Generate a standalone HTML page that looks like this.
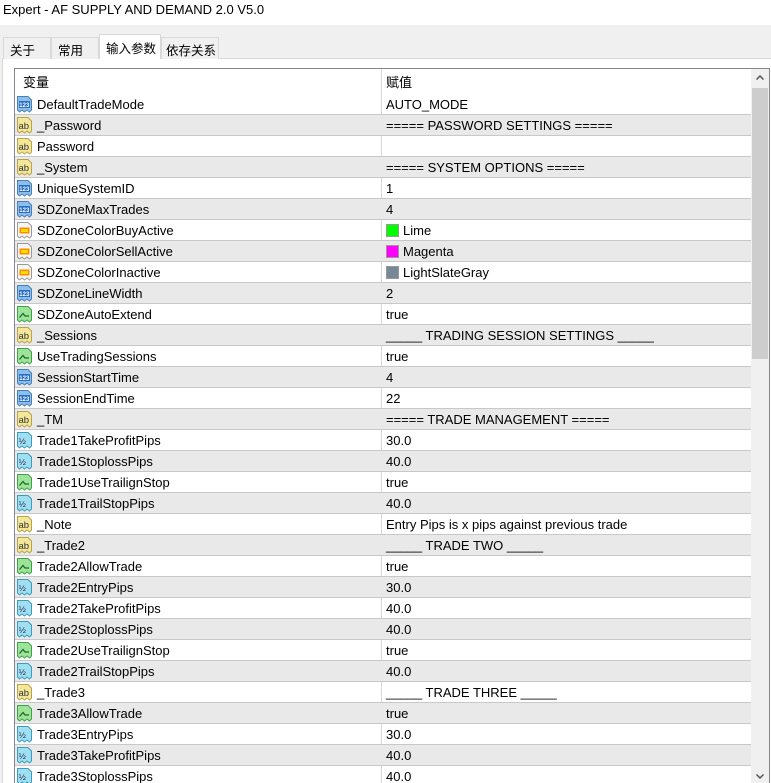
<!DOCTYPE html>
<html><head><meta charset="utf-8"><style>
*{margin:0;padding:0;box-sizing:border-box}
body{width:771px;height:783px;overflow:hidden;background:#f0f0f0;font-family:"Liberation Sans","Noto Sans CJK SC",sans-serif;font-size:13px;color:#000;position:relative}
.title{position:absolute;left:0;top:0;width:771px;height:25px;background:#fff;padding:2px 0 0 3px;font-size:13px}
.tab{position:absolute;top:37px;height:22px;border:1px solid #d9d9d9;border-bottom:none;background:#f0f0f0;padding:2px 0 0 6px;font-size:12.5px}
.tab.act{top:34px;height:25px;background:#fff;z-index:2;padding-top:3px}
.panel{position:absolute;left:2px;top:58px;width:769px;height:725px;background:#fff;border-top:1px solid #d9d9d9;border-left:1px solid #d9d9d9}
.tbl{position:absolute;left:14px;top:68px;width:756px;height:715px;border:1px solid #828790;border-bottom:none;background:#fff;overflow:hidden}
.hdr{position:absolute;left:0;top:0;width:736px;height:25px}
.hdr span{position:absolute;top:3px}
.row{position:absolute;left:0;width:736px;height:21px;border-bottom:1px solid #c8c8c8}
.row.g{background:#e9e9e9}
.row .n{position:absolute;left:22px;top:3px;white-space:nowrap}
.row .v{position:absolute;left:371px;top:3px;white-space:nowrap}
.row svg{position:absolute;left:2px;top:2px}
.div{position:absolute;left:366px;top:0;width:1px;height:715px;background:#d8d8d8}
.sw{display:inline-block;width:13px;height:13px;border:1px solid #999;vertical-align:-2px;margin-right:4px}
.sb{position:absolute;left:736px;top:0;width:18px;height:715px;background:#f0f0f0}
.th{position:absolute;left:1px;top:19px;width:16px;height:271px;background:#cdcdcd}
</style></head><body>
<div class="title">Expert - AF SUPPLY AND DEMAND 2.0 V5.0</div>
<div class="panel"></div>
<div class="tab" style="left:3px;width:48px">关于</div>
<div class="tab" style="left:51px;width:48px">常用</div>
<div class="tab act" style="left:99px;width:62px">输入参数</div>
<div class="tab" style="left:161px;width:58px;padding-left:4px">依存关系</div>
<div class="tbl">
<div class="hdr"><span style="left:8px">变量</span><span style="left:371px">赋值</span></div>
<div class="div"></div>
<div id="rows"></div>
<div class="sb"><div class="th"></div>
<svg style="position:absolute;left:5px;top:6px" width="8" height="5"><path d="M0.5 4.5L4 1L7.5 4.5" stroke="#555" fill="none" stroke-width="1.5"/></svg>
<svg style="position:absolute;left:5px;top:705px" width="8" height="5"><path d="M0.5 0.5L4 4L7.5 0.5" stroke="#555" fill="none" stroke-width="1.5"/></svg>
</div>
</div>
<script>
var P='<path d="M0.5 0.5H11L14.5 4V14L12.5 16L10 14L7.5 16L5 14L2.5 16L0.5 14Z" ';
var I={
n:'<svg width="16" height="17">'+P+'fill="#8cc0ec" stroke="#4a7fb5"/><rect x="2" y="5" width="11" height="7" fill="#2a6cc0"/><text x="2.3" y="11" font-size="6" font-weight="bold" fill="#fff" font-family="Liberation Sans">123</text></svg>',
s:'<svg width="16" height="17">'+P+'fill="#f3e79a" stroke="#b9a24a"/><text x="1.5" y="12" font-size="9.5" fill="#333" font-family="Liberation Sans">ab</text></svg>',
c:'<svg width="16" height="17">'+P+'fill="#f6f6f6" stroke="#999"/><rect x="2.5" y="5.5" width="10" height="6" fill="#ff8c00"/><rect x="4" y="7" width="7" height="3" fill="#ffdd00"/></svg>',
b:'<svg width="16" height="17">'+P+'fill="#9ee39a" stroke="#3fa24a"/><path d="M2.5 11.5L6 7.5L8 10H12" stroke="#1b6d20" fill="none" stroke-width="1.3"/></svg>',
d:'<svg width="16" height="17">'+P+'fill="#9fdff0" stroke="#3c9cbf"/><text x="1.8" y="12" font-size="8.5" fill="#225" font-family="Liberation Sans">½</text></svg>'};
var R=[['n','DefaultTradeMode','AUTO_MODE'],['s','_Password','===== PASSWORD SETTINGS ====='],['s','Password',''],['s','_System','===== SYSTEM OPTIONS ====='],['n','UniqueSystemID','1'],['n','SDZoneMaxTrades','4'],['c','SDZoneColorBuyActive','<span class="sw" style="background:#00ff00"></span>Lime'],['c','SDZoneColorSellActive','<span class="sw" style="background:#ff00ff"></span>Magenta'],['c','SDZoneColorInactive','<span class="sw" style="background:#778899"></span>LightSlateGray'],['n','SDZoneLineWidth','2'],['b','SDZoneAutoExtend','true'],['s','_Sessions','_____ TRADING SESSION SETTINGS _____'],['b','UseTradingSessions','true'],['n','SessionStartTime','4'],['n','SessionEndTime','22'],['s','_TM','===== TRADE MANAGEMENT ====='],['d','Trade1TakeProfitPips','30.0'],['d','Trade1StoplossPips','40.0'],['b','Trade1UseTrailignStop','true'],['d','Trade1TrailStopPips','40.0'],['s','_Note','Entry Pips is x pips against previous trade'],['s','_Trade2','_____ TRADE TWO _____'],['b','Trade2AllowTrade','true'],['d','Trade2EntryPips','30.0'],['d','Trade2TakeProfitPips','40.0'],['d','Trade2StoplossPips','40.0'],['b','Trade2UseTrailignStop','true'],['d','Trade2TrailStopPips','40.0'],['s','_Trade3','_____ TRADE THREE _____'],['b','Trade3AllowTrade','true'],['d','Trade3EntryPips','30.0'],['d','Trade3TakeProfitPips','40.0'],['d','Trade3StoplossPips','40.0']];
var h='';R.forEach(function(r,i){h+='<div class="row'+(i%2?' g':'')+'" style="top:'+(25+21*i)+'px">'+I[r[0]]+'<span class="n">'+r[1]+'</span><span class="v">'+r[2]+'</span></div>'});
document.getElementById('rows').innerHTML=h;
</script>
</body></html>
